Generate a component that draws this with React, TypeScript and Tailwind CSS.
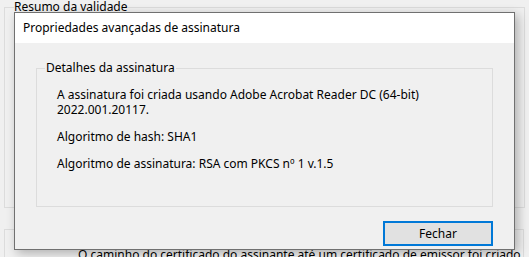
const details = [
  ["A assinatura foi criada usando Adobe Acrobat Reader DC (64-bit)", "2022.001.20117."],
  ["Algoritmo de hash: SHA1"],
  ["Algoritmo de assinatura: RSA com PKCS nº 1 v.1.5"],
];

function SignatureDialog() {
  return (
    <div className="absolute left-[14px] top-[12px] flex h-[238px] w-[501px] flex-col border border-[#707070] bg-[#f0f0f0] shadow-[3px_3px_10px_rgba(0,0,0,0.28)]">
      <div className="flex h-[30px] items-center bg-white pl-[8px] leading-[16px]">
        Propriedades avançadas de assinatura
      </div>

      <fieldset className="mx-[21px] mt-[17px] h-[147px] border border-[#dcdcdc] px-[8px] pt-[11px]">
        <legend className="px-[1px] leading-[16px]">Detalhes da assinatura</legend>
        <div className="flex flex-col gap-[12px] pl-[12px] leading-[15px]">
          {details.map((lines) => (
            <p key={lines[0]}>
              {lines.map((line) => (
                <span key={line} className="block">
                  {line}
                </span>
              ))}
            </p>
          ))}
        </div>
      </fieldset>

      <div className="mt-[14px] flex justify-end pr-[21px]">
        <button className="h-[25px] w-[110px] border-2 border-[#0078d7] bg-[#e1e1e1] leading-[16px] text-black">
          Fechar
        </button>
      </div>
    </div>
  );
}

export default function App() {
  return (
    <div className="relative h-[257px] w-[529px] overflow-hidden bg-[#f0f0f0] pl-[4px] font-['Noto_Sans',sans-serif] text-[12px] text-black">
      <fieldset className="h-[208px] w-[521px] border border-[#dcdcdc] px-[9px]">
        <legend className="leading-[14px]">Resumo da validade</legend>
      </fieldset>

      <fieldset className="mt-[21px] h-[60px] w-[520px] border border-[#dcdcdc] pl-[73px] pt-[17px]">
        <p className="leading-[16px]">
          O caminho do certificado do assinante até um certificado de emissor foi criado
        </p>
      </fieldset>

      <SignatureDialog />
    </div>
  );
}
